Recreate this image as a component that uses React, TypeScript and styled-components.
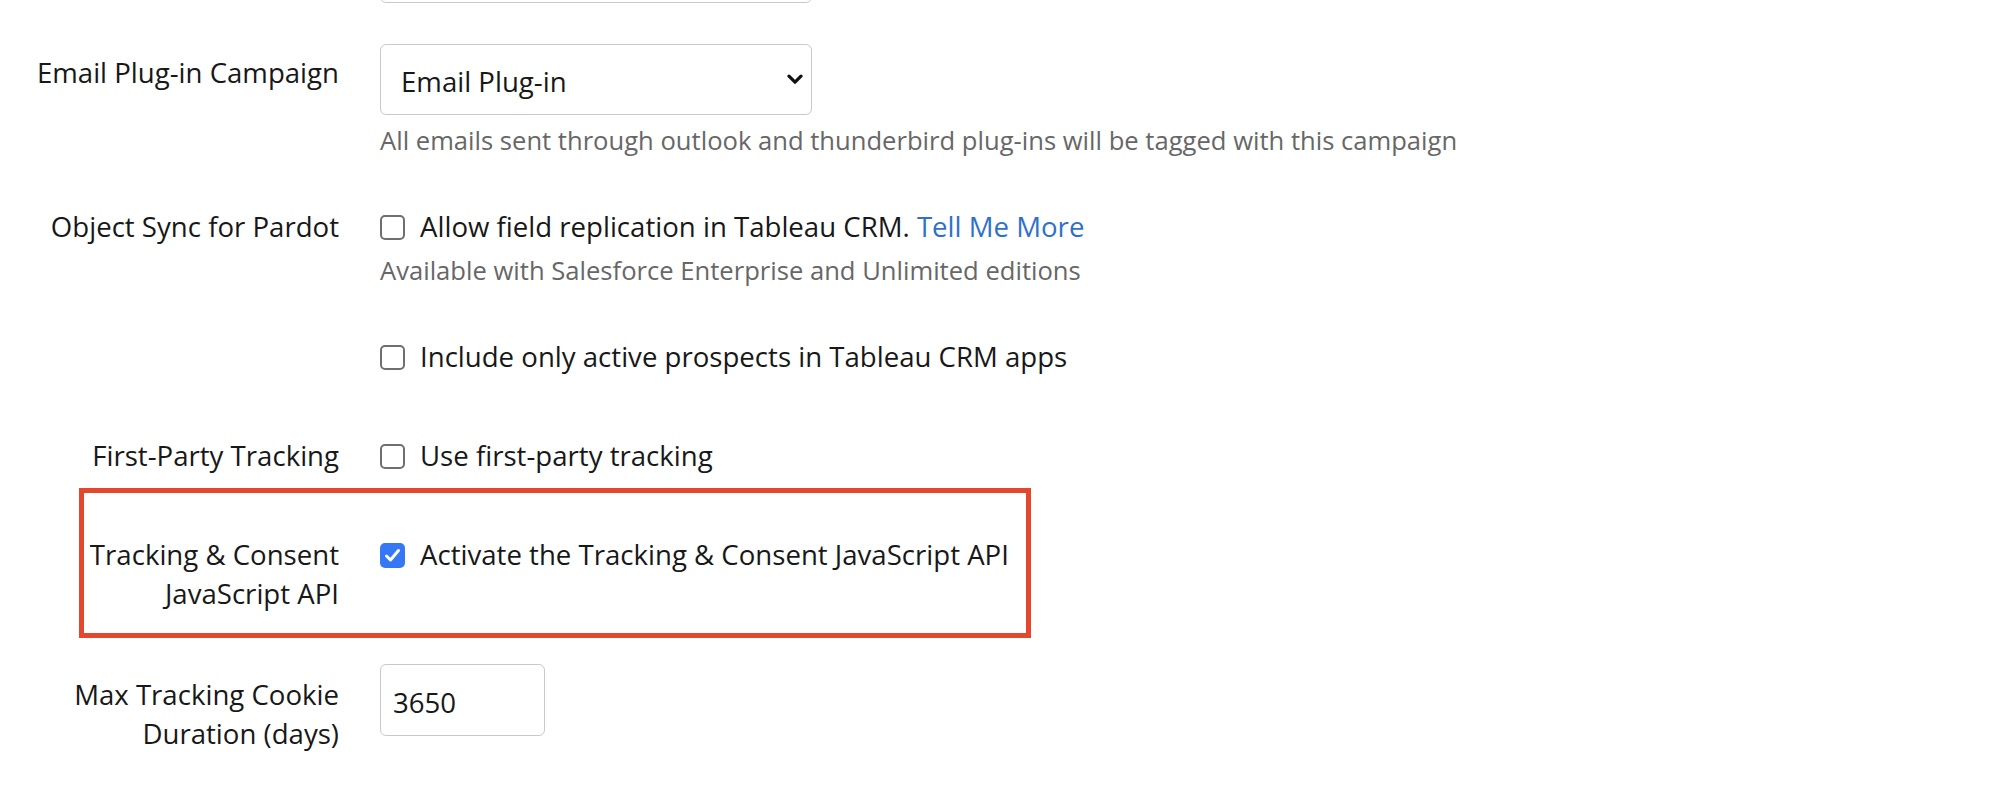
import React, { useState } from "react";
import styled, { createGlobalStyle } from "styled-components";

const GlobalStyle = createGlobalStyle`
  html, body {
    margin: 0;
    padding: 0;
    background: #ffffff;
  }
  body {
    font-family: "Open Sans", "Noto Sans", sans-serif;
    color: #181818;
    overflow: hidden;
  }
`;

const Form = styled.form`
  display: flex;
  flex-direction: column;
  width: 2000px;
  height: 800px;
  overflow: hidden;
`;

const Row = styled.div<{ $top: number }>`
  display: grid;
  grid-template-columns: 339px 1fr;
  column-gap: 41px;
  align-items: start;
  margin-top: ${(p) => p.$top}px;
  position: relative;
`;

const Label = styled.label<{ $pad?: number }>`
  text-align: right;
  font-size: 27.6px;
  line-height: 39px;
  padding-top: ${(p) => p.$pad ?? 0}px;
  color: #181818;
`;

const Control = styled.div`
  display: flex;
  flex-direction: column;
  align-items: flex-start;
`;

const ClippedBox = styled.div`
  width: 432px;
  height: 71px;
  margin-top: -68px;
  box-sizing: border-box;
  border: 1.5px solid #c9c9c9;
  border-radius: 6px;
`;

const SelectWrap = styled.div`
  position: relative;
  width: 432px;
  height: 71px;
`;

const Select = styled.select`
  appearance: none;
  width: 100%;
  height: 100%;
  box-sizing: border-box;
  border: 1.5px solid #c9c9c9;
  border-radius: 6px;
  background: #ffffff;
  padding: 4px 40px 0 20px;
  font-family: "Open Sans", "Noto Sans", sans-serif;
  font-size: 27.6px;
  line-height: 39px;
  color: #181818;
`;

const Chevron = styled.svg`
  position: absolute;
  right: 9px;
  top: 30px;
  pointer-events: none;
`;

const NumberInput = styled.input`
  width: 165px;
  height: 72px;
  box-sizing: border-box;
  border: 1.5px solid #c9c9c9;
  border-radius: 6px;
  padding: 4px 12px 0;
  font-family: "Open Sans", "Noto Sans", sans-serif;
  font-size: 27.6px;
  line-height: 39px;
  color: #181818;
  outline: none;
`;

const Help = styled.div<{ $top: number }>`
  font-size: 25.6px;
  line-height: 35px;
  color: #676767;
  margin-top: ${(p) => p.$top}px;
  white-space: nowrap;
`;

const CheckLine = styled.label`
  display: flex;
  align-items: flex-start;
  gap: 15px;
  font-size: 27.6px;
  line-height: 39px;
  color: #181818;
  white-space: nowrap;
  cursor: pointer;
`;

const Box = styled.span<{ $checked: boolean }>`
  flex: none;
  width: 25px;
  height: 25px;
  margin-top: 8px;
  box-sizing: border-box;
  border-radius: 5px;
  border: ${(p) => (p.$checked ? "none" : "2px solid #6f6f6f")};
  background: ${(p) => (p.$checked ? "#3478f6" : "#ffffff")};
  display: flex;
  align-items: center;
  justify-content: center;
`;

const HiddenInput = styled.input`
  display: none;
`;

const Link = styled.a`
  color: #2f71c9;
  text-decoration: none;
`;

const Highlight = styled(Row)`
  &::after {
    content: "";
    position: absolute;
    left: 79px;
    top: -47px;
    width: 952px;
    bottom: -25px;
    box-sizing: border-box;
    border: 5px solid #e4472c;
    pointer-events: none;
  }
`;

type CheckProps = {
  checked: boolean;
  onToggle: () => void;
  children: React.ReactNode;
};

const Checkbox: React.FC<CheckProps> = ({ checked, onToggle, children }) => (
  <CheckLine>
    <HiddenInput type="checkbox" checked={checked} onChange={onToggle} />
    <Box $checked={checked}>
      {checked && (
        <svg width="17" height="15" viewBox="0 0 17 15">
          <path
            d="M2.5 8 L6.5 12 L14.5 2.5"
            fill="none"
            stroke="#ffffff"
            strokeWidth="3"
            strokeLinecap="round"
            strokeLinejoin="round"
          />
        </svg>
      )}
    </Box>
    <span>{children}</span>
  </CheckLine>
);

const App: React.FC = () => {
  const [campaign, setCampaign] = useState("Email Plug-in");
  const [replicate, setReplicate] = useState(false);
  const [activeOnly, setActiveOnly] = useState(false);
  const [firstParty, setFirstParty] = useState(false);
  const [consentApi, setConsentApi] = useState(true);
  const [cookieDays, setCookieDays] = useState("3650");

  return (
    <>
      <GlobalStyle />
      <Form onSubmit={(e) => e.preventDefault()}>
        <Row $top={0}>
          <span />
          <ClippedBox />
        </Row>

        <Row $top={41}>
          <Label $pad={9}>Email Plug-in Campaign</Label>
          <Control>
            <SelectWrap>
              <Select value={campaign} onChange={(e) => setCampaign(e.target.value)}>
                <option value="Email Plug-in">Email Plug-in</option>
              </Select>
              <Chevron width="16" height="11" viewBox="0 0 16 11">
                <path
                  d="M2 2.2 L8 8.2 L14 2.2"
                  fill="none"
                  stroke="#111111"
                  strokeWidth="3.2"
                  strokeLinecap="round"
                  strokeLinejoin="round"
                />
              </Chevron>
            </SelectWrap>
            <Help $top={8}>
              All emails sent through outlook and thunderbird plug-ins will be tagged with this
              campaign
            </Help>
          </Control>
        </Row>

        <Row $top={49}>
          <Label>Object Sync for Pardot</Label>
          <Control>
            <Checkbox checked={replicate} onToggle={() => setReplicate(!replicate)}>
              Allow field replication in Tableau CRM. <Link href="#">Tell Me More</Link>
            </Checkbox>
            <Help $top={7}>Available with Salesforce Enterprise and Unlimited editions</Help>
          </Control>
        </Row>

        <Row $top={49}>
          <span />
          <Control>
            <Checkbox checked={activeOnly} onToggle={() => setActiveOnly(!activeOnly)}>
              Include only active prospects in Tableau CRM apps
            </Checkbox>
          </Control>
        </Row>

        <Row $top={60}>
          <Label>First-Party Tracking</Label>
          <Control>
            <Checkbox checked={firstParty} onToggle={() => setFirstParty(!firstParty)}>
              Use first-party tracking
            </Checkbox>
          </Control>
        </Row>

        <Highlight $top={60}>
          <Label>
            Tracking &amp; Consent
            <br />
            JavaScript API
          </Label>
          <Control>
            <Checkbox checked={consentApi} onToggle={() => setConsentApi(!consentApi)}>
              Activate the Tracking &amp; Consent JavaScript API
            </Checkbox>
          </Control>
        </Highlight>

        <Row $top={51}>
          <Label $pad={11}>
            Max Tracking Cookie
            <br />
            Duration (days)
          </Label>
          <Control>
            <NumberInput value={cookieDays} onChange={(e) => setCookieDays(e.target.value)} />
          </Control>
        </Row>
      </Form>
    </>
  );
};

export default App;
